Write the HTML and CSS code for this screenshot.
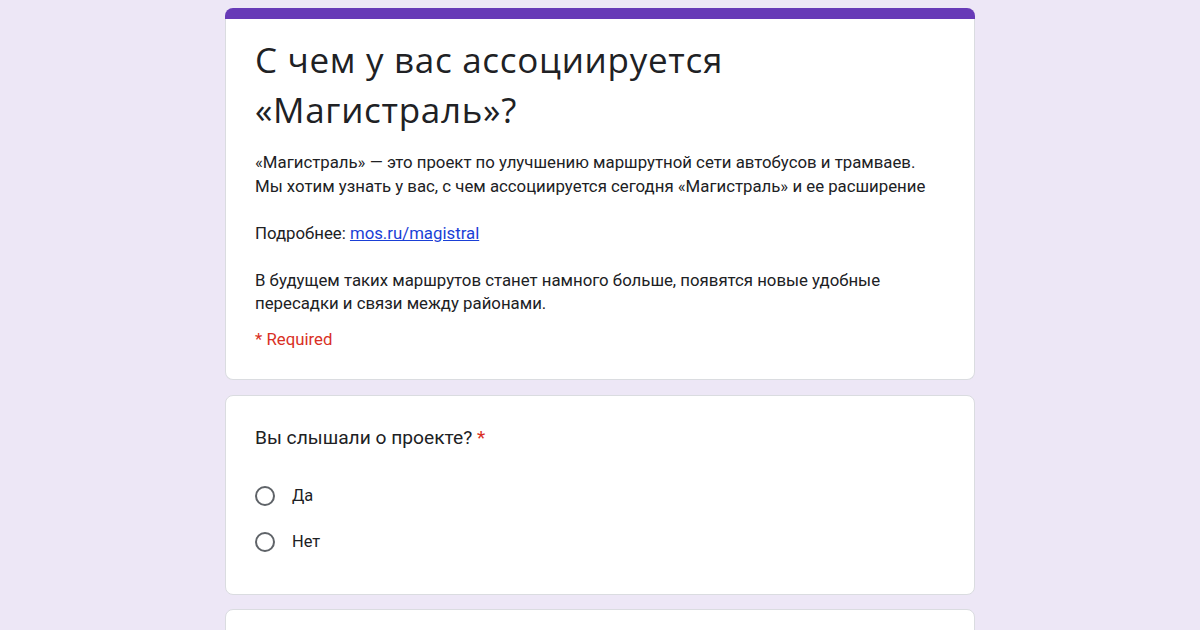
FILE: index.html
```html
<!DOCTYPE html>
<html lang="ru">
<head>
  <meta charset="UTF-8">
  <meta name="viewport" content="width=device-width, initial-scale=1.0">
  <title>С чем у вас ассоциируется «Магистраль»?</title>
  <link rel="stylesheet" href="styles.css">
</head>
<body>
  <div id="form-container">
    <div class="intro">
      <div class="accent"></div>
      <div class="card intro-card">
        <h1 class="form-title">С чем у вас ассоциируется «Магистраль»?</h1>
        <div class="form-desc">
          <p>«Магистраль» — это проект по улучшению маршрутной сети автобусов и трамваев.<br>Мы хотим узнать у вас, с чем ассоциируется сегодня «Магистраль» и ее расширение</p>
          <p>Подробнее: <a href="#">mos.ru/magistral</a></p>
          <p>В будущем таких маршрутов станет намного больше, появятся новые удобные<br>пересадки и связи между районами.</p>
        </div>
        <div class="required-note">* Required</div>
      </div>
    </div>

    <div class="card question">
      <div class="question-title">Вы слышали о проекте? <span class="star">*</span></div>
      <div class="options">
        <label class="option"><span class="radio"></span>Да</label>
        <label class="option"><span class="radio"></span>Нет</label>
      </div>
    </div>

    <div class="card question"></div>
  </div>
</body>
</html>
```

FILE: styles.css
```css
body {
  font-family: 'Roboto', 'Liberation Sans', sans-serif;
  background-color: #ede7f6;
  color: #202124;
  margin: 0;
  padding: 8px 0 0;
}

#form-container {
  width: 750px;
  margin: 0 auto;
  display: flex;
  flex-direction: column;
  gap: 15px;
}

.card {
  background-color: #fff;
  border: 1px solid #dadce0;
  border-radius: 8px;
}

.accent {
  height: 11px;
  background-color: #673ab7;
  border-radius: 8px 8px 0 0;
}

.intro-card {
  border-top: none;
  border-radius: 0 0 8px 8px;
  padding: 16px 29px 29px;
}

.form-title {
  font-family: 'Open Sans', 'Roboto', sans-serif;
  font-weight: 400;
  font-size: 35px;
  letter-spacing: 0.7px;
  line-height: 50px;
  margin: 0;
  width: 600px;
}

.form-desc {
  margin-top: 16px;
  font-size: 16.8px;
  line-height: 23.5px;
}

.form-desc p {
  margin: 0 0 23.5px;
}

.form-desc p:last-child {
  margin-bottom: 0;
}

.form-desc a {
  color: #1a3fd6;
}

.required-note {
  margin-top: 12px;
  font-size: 16.8px;
  line-height: 22px;
  color: #d93025;
}

.question {
  padding: 29px 29px 29px;
}

.question + .question {
  margin-top: -1px;
}

.question:last-child {
  height: 40px;
  padding: 0;
}

.question-title {
  font-size: 19.2px;
  line-height: 26px;
}

.star {
  color: #d93025;
}

.options {
  margin-top: 22px;
  display: flex;
  flex-direction: column;
}

.option {
  display: flex;
  align-items: center;
  gap: 17px;
  height: 46px;
  font-size: 16.4px;
}

.radio {
  width: 20px;
  height: 20px;
  box-sizing: border-box;
  border: 2px solid #5f6368;
  border-radius: 50%;
}
```
